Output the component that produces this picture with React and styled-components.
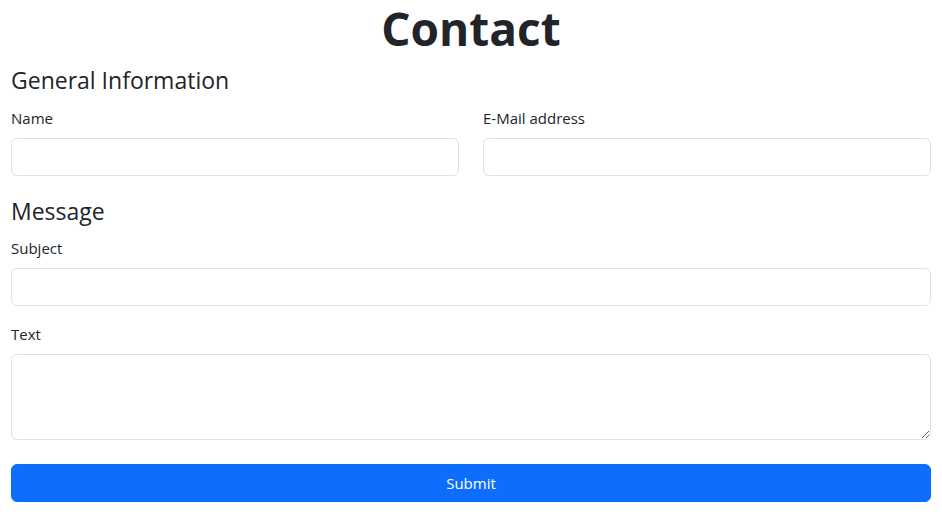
import React from "react";
import styled, { createGlobalStyle } from "styled-components";

const Global = createGlobalStyle`
  *, *::before, *::after { box-sizing: border-box; }
  body {
    margin: 0;
    background: #fff;
    color: #212529;
    font-family: "Open Sans", "Noto Sans", sans-serif;
    font-size: 16px;
    line-height: 1.5;
  }
`;

const Page = styled.form`
  padding: 0 11px;
`;

const Title = styled.h1`
  margin: 0 0 10px;
  text-align: center;
  font-size: 46px;
  font-weight: 700;
  line-height: 56px;
`;

const SectionTitle = styled.h4`
  margin: ${(p) => (p.$first ? "0 0 12px" : "5px 0 11px")};
  font-size: 23px;
  font-weight: 400;
  line-height: 28px;
`;

const Row = styled.div`
  display: grid;
  grid-template-columns: ${(p) => (p.$cols ? `repeat(${p.$cols}, 1fr)` : "1fr")};
  column-gap: 24px;
`;

const Field = styled.div`
  display: flex;
  flex-direction: column;
  margin-bottom: 16px;
`;

const Label = styled.label`
  font-size: 15px;
  line-height: 24px;
  margin-bottom: 8px;
`;

const Input = styled.input`
  display: block;
  width: 100%;
  height: 38px;
  padding: 6px 12px;
  font: inherit;
  border: 1px solid #dee2e6;
  border-radius: 6px;
  background: #fff;
  color: #212529;
`;

const TextArea = styled.textarea`
  display: block;
  width: 100%;
  height: 86px;
  padding: 6px 12px;
  font: inherit;
  border: 1px solid #dee2e6;
  border-radius: 6px;
  background: #fff;
  color: #212529;
  resize: vertical;
`;

const Submit = styled.button`
  display: block;
  width: 100%;
  height: 38px;
  margin-top: 24px;
  border: 1px solid #0d6efd;
  border-radius: 6px;
  background: #0d6efd;
  color: #fff;
  font: inherit;
  font-size: 15px;
  cursor: pointer;
`;

export default function App() {
  return (
    <>
      <Global />
      <Page onSubmit={(e) => e.preventDefault()}>
        <Title>Contact</Title>
        <SectionTitle $first>General Information</SectionTitle>
        <Row $cols={2}>
          <Field>
            <Label htmlFor="name">Name</Label>
            <Input id="name" type="text" />
          </Field>
          <Field>
            <Label htmlFor="email">E-Mail address</Label>
            <Input id="email" type="email" />
          </Field>
        </Row>
        <SectionTitle>Message</SectionTitle>
        <Field>
          <Label htmlFor="subject">Subject</Label>
          <Input id="subject" type="text" />
        </Field>
        <Field>
          <Label htmlFor="text">Text</Label>
          <TextArea id="text" />
        </Field>
        <Submit type="submit">Submit</Submit>
      </Page>
    </>
  );
}
